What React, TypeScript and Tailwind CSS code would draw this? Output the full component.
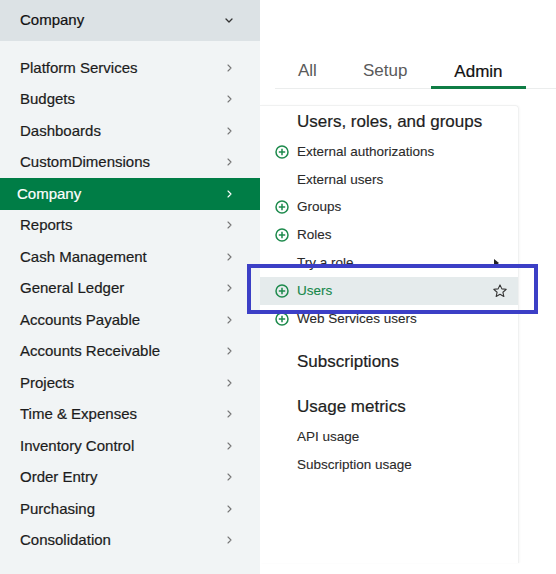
import React from "react";

const sideItems = [
  "Platform Services",
  "Budgets",
  "Dashboards",
  "CustomDimensions",
  "Company",
  "Reports",
  "Cash Management",
  "General Ledger",
  "Accounts Payable",
  "Accounts Receivable",
  "Projects",
  "Time & Expenses",
  "Inventory Control",
  "Order Entry",
  "Purchasing",
  "Consolidation",
];

function ChevronRight({ color }: { color: string }) {
  return (
    <svg width="5" height="8" viewBox="0 0 5 8" fill="none">
      <polyline points="1,1 4,4 1,7" stroke={color} strokeWidth="1.1" strokeLinecap="round" strokeLinejoin="round" />
    </svg>
  );
}

function ChevronDown() {
  return (
    <svg width="8" height="5" viewBox="0 0 8 5" fill="none">
      <polyline points="1,1 4,4 7,1" stroke="#333" strokeWidth="1.3" strokeLinecap="round" strokeLinejoin="round" />
    </svg>
  );
}

function PlusCircle() {
  return (
    <svg width="14" height="14" viewBox="0 0 14 14" fill="none">
      <circle cx="7" cy="7" r="6" stroke="#1d8a4c" strokeWidth="1.5" />
      <line x1="7" y1="3.8" x2="7" y2="10.2" stroke="#1d8a4c" strokeWidth="1.5" />
      <line x1="3.8" y1="7" x2="10.2" y2="7" stroke="#1d8a4c" strokeWidth="1.5" />
    </svg>
  );
}

function Star() {
  return (
    <svg width="16" height="16" viewBox="0 0 24 24" fill="none">
      <path
        d="M12 2.8l2.8 6 6.5.7-4.9 4.4 1.4 6.4L12 17l-5.8 3.3 1.4-6.4-4.9-4.4 6.5-.7z"
        stroke="#333"
        strokeWidth="1.6"
        strokeLinejoin="round"
      />
    </svg>
  );
}

type Item = { label: string; plus?: boolean; caret?: boolean; active?: boolean };

function Row({ item }: { item: Item }) {
  return (
    <div
      className={
        "relative flex h-[27.8px] items-center " + (item.active ? "bg-[#e5ebec]" : "")
      }
    >
      <div className="flex w-[37px] items-center justify-end pr-[8px]">
        {item.plus ? <PlusCircle /> : null}
      </div>
      <span
        className={
          "flex-1 text-[13.5px] [-webkit-text-stroke:0.1px_currentColor] " +
          (item.active ? "text-[#16874a]" : "text-[#2a2a2a]")
        }
      >
        {item.label}
      </span>
      {item.caret ? (
        <div className="mr-[19px] h-0 w-0 border-y-[4px] border-l-[5px] border-y-transparent border-l-[#222]" />
      ) : null}
      {item.active ? (
        <div className="mr-[10px] flex items-center">
          <Star />
        </div>
      ) : null}
    </div>
  );
}

function Heading({ children, className = "" }: { children: React.ReactNode; className?: string }) {
  return (
    <div
      className={
        "h-[24px] pl-[37px] text-[17px] leading-[24px] text-[#1e1e1e] [-webkit-text-stroke:0.2px_currentColor] " +
        className
      }
    >
      {children}
    </div>
  );
}

export default function App() {
  const group1: Item[] = [
    { label: "External authorizations", plus: true },
    { label: "External users" },
    { label: "Groups", plus: true },
    { label: "Roles", plus: true },
    { label: "Try a role", caret: true },
    { label: "Users", plus: true, active: true },
    { label: "Web Services users", plus: true },
  ];
  const group3: Item[] = [{ label: "API usage" }, { label: "Subscription usage" }];

  return (
    <div
      className="relative flex h-[574px] w-[556px] overflow-hidden bg-white"
      style={{ fontFamily: '"Liberation Sans", Arial, sans-serif' }}
    >
      <aside className="flex w-[260px] flex-col">
        <div className="flex h-[41px] items-center justify-between bg-[#dce2e5] pl-[20px] pr-[27px]">
          <span className="text-[15px] text-[#111] [-webkit-text-stroke:0.2px_currentColor]">Company</span>
          <ChevronDown />
        </div>
        <div className="flex-1 bg-[#f1f4f5] pt-[11px]">
          {sideItems.map((label, i) => {
            const selected = i === 4;
            return (
              <div
                key={label}
                className={
                  "flex h-[31.5px] items-center justify-between pr-[28px] " +
                  (selected ? "bg-[#007d46] pl-[17px]" : "pl-[20px]")
                }
              >
                <span
                  className={
                    "text-[15px] [-webkit-text-stroke:0.2px_currentColor] " +
                    (selected ? "text-white" : "text-[#1c1c1c]")
                  }
                >
                  {label}
                </span>
                <ChevronRight color={selected ? "#ffffff" : "#777"} />
              </div>
            );
          })}
        </div>
      </aside>

      <main className="flex flex-1 flex-col pt-[52px]">
        <div className="ml-[15px] flex h-[37px] border-b border-[#ebeded]">
          <div className="flex items-center px-[23px] pt-[2px] text-[17px] text-[#5a5a5a]">All</div>
          <div className="flex items-center px-[23px] pt-[2px] text-[17px] text-[#5a5a5a]">Setup</div>
          <div className="-mb-px ml-px flex items-center border-b-[3px] border-[#0f7d45] px-[23px] pt-[5px] text-[17px] text-[#111] [-webkit-text-stroke:0.2px_currentColor]">
            Admin
          </div>
        </div>

        <div className="mt-[16px] h-[458px] w-[259px] rounded-tr-[4px] border-r border-t border-[#f0f1f1] pt-[4px] shadow-[1px_0_2px_rgba(0,0,0,0.03)]">
          <Heading className="mb-[4px]">Users, roles, and groups</Heading>
          {group1.map((it) => (
            <Row key={it.label} item={it} />
          ))}
          <Heading className="mt-[17px]">Subscriptions</Heading>
          <Heading className="mb-[5px] mt-[21px]">Usage metrics</Heading>
          {group3.map((it) => (
            <Row key={it.label} item={it} />
          ))}
        </div>
      </main>

      <div className="pointer-events-none absolute left-[247px] top-[264px] h-[50px] w-[291px] border-[4px] border-[#3c3fc6]" />
    </div>
  );
}
